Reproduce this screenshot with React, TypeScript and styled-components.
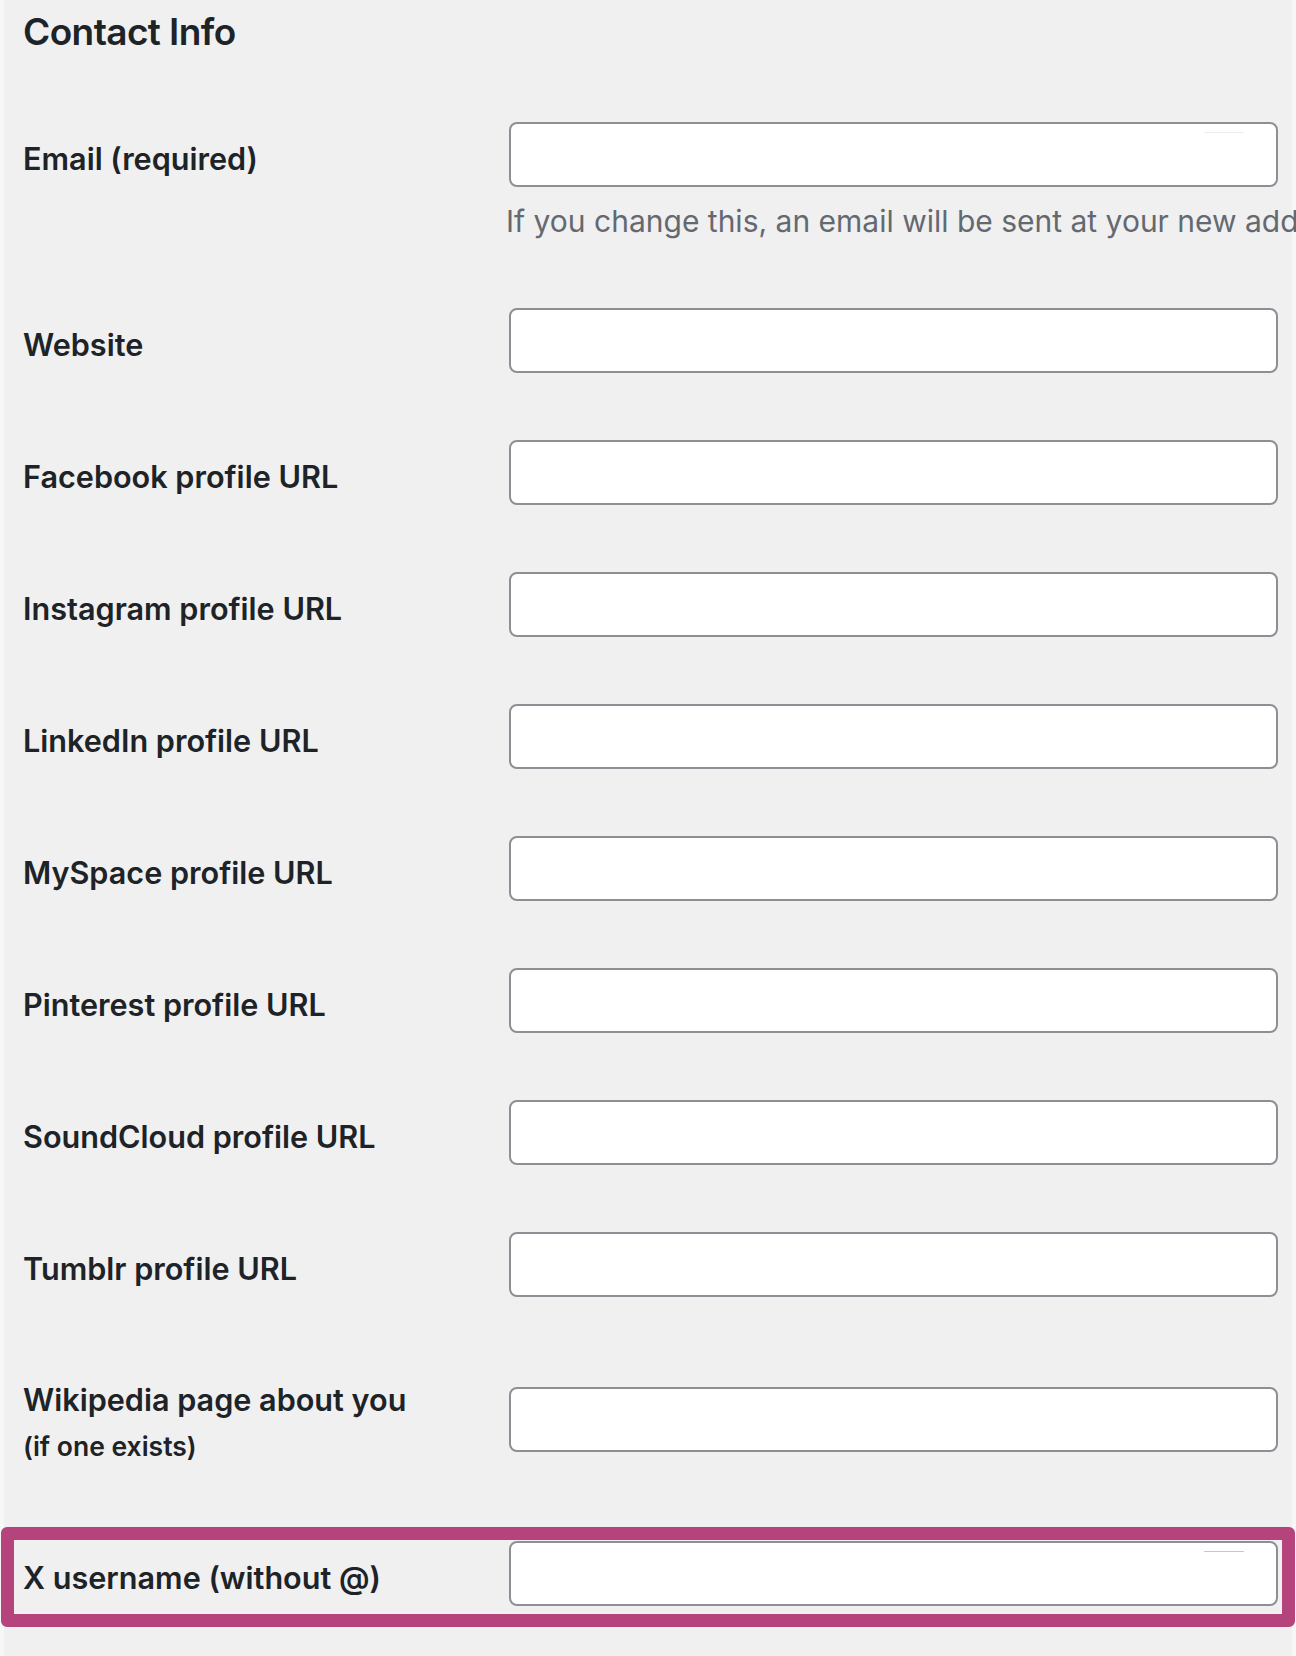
import React from 'react';
import styled, { createGlobalStyle } from 'styled-components';

const GlobalStyle = createGlobalStyle`
  html, body {
    margin: 0;
    padding: 0;
    background: #f6f7f7;
  }
  body {
    font-family: Inter, "Noto Sans", "Liberation Sans", sans-serif;
    color: #1d2327;
  }
`;

const Frame = styled.div`
  width: 1296px;
  min-height: 1656px;
  overflow: hidden;
  background: #f6f7f7;
`;

const Page = styled.div`
  width: 1288px;
  min-height: 1656px;
  margin-left: 4px;
  padding-left: 19px;
  box-sizing: border-box;
  background: #f0f0f1;
`;

const Heading = styled.h2`
  margin: 0;
  padding-top: 9px;
  font-size: 37px;
  line-height: 46px;
  font-weight: 600;
  letter-spacing: -0.6px;
  color: #1d2327;
`;

const Table = styled.div`
  margin-top: 33.5px;
  width: 1255px;
`;

const Row = styled.div<{ $highlight?: boolean }>`
  position: relative;
  display: grid;
  grid-template-columns: 486px 1fr;
  min-height: 132px;

  ${({ $highlight }) =>
    $highlight &&
    `
    &::after {
      content: '';
      position: absolute;
      top: 19.5px;
      left: -22px;
      width: 1294px;
      height: 100px;
      box-sizing: border-box;
      border: 13px solid #b5437c;
      border-radius: 6px;
      pointer-events: none;
    }
  `}
`;

const Label = styled.label<{ $top?: number }>`
  align-self: start;
  padding: ${({ $top = 50 }) => `${$top}px 0 40px`};
  font-size: 30.6px;
  line-height: 39px;
  font-weight: 600;
  color: #1d2327;
`;

const SubLabel = styled.span`
  display: block;
  margin-top: 5px;
  font-size: 26.5px;
  line-height: 44px;
  font-weight: 600;
`;

const Field = styled.div`
  align-self: center;
  padding: 33.5px 0;
  min-width: 0;
`;

const InputBox = styled.div`
  position: relative;
`;

const Input = styled.input`
  display: block;
  width: 100%;
  height: 65px;
  box-sizing: border-box;
  margin: 0;
  padding: 0 16px;
  border: 2px solid #8c8f94;
  border-radius: 8px;
  background: #fff;
  font-family: inherit;
  font-size: 30px;
  color: #2c3338;
  outline: none;
`;

const Mark = styled.span<{ $tone: string }>`
  position: absolute;
  top: 10px;
  right: 34px;
  width: 40px;
  height: 1px;
  background: ${({ $tone }) => $tone};
`;

const Description = styled.p`
  margin: 14px 0 0 -3px;
  font-size: 30px;
  line-height: 40px;
  color: #646970;
  white-space: nowrap;
`;

type FieldDef = {
  id: string;
  label: string;
  sub?: string;
  description?: string;
  highlight?: boolean;
  mark?: string;
  labelTop?: number;
};

const fields: FieldDef[] = [
  {
    id: 'email',
    label: 'Email (required)',
    description:
      'If you change this, an email will be sent at your new address to confirm it. The new address will not become active until confirmed.',
    mark: '#ececec',
  },
  { id: 'url', label: 'Website' },
  { id: 'facebook', label: 'Facebook profile URL' },
  { id: 'instagram', label: 'Instagram profile URL' },
  { id: 'linkedin', label: 'LinkedIn profile URL' },
  { id: 'myspace', label: 'MySpace profile URL' },
  { id: 'pinterest', label: 'Pinterest profile URL' },
  { id: 'soundcloud', label: 'SoundCloud profile URL' },
  { id: 'tumblr', label: 'Tumblr profile URL' },
  { id: 'wikipedia', label: 'Wikipedia page about you', sub: '(if one exists)', labelTop: 49 },
  { id: 'twitter', label: 'X username (without @)', highlight: true, mark: '#e6b9be' },
];

export default function App() {
  return (
    <>
      <GlobalStyle />
      <Frame>
        <Page>
          <Heading>Contact Info</Heading>
          <Table>
            {fields.map((f) => (
              <Row key={f.id} $highlight={f.highlight}>
                <Label htmlFor={f.id} $top={f.labelTop}>
                  {f.label}
                  {f.sub && <SubLabel>{f.sub}</SubLabel>}
                </Label>
                <Field>
                  <InputBox>
                    <Input id={f.id} type="text" />
                    {f.mark && <Mark $tone={f.mark} />}
                  </InputBox>
                  {f.description && <Description>{f.description}</Description>}
                </Field>
              </Row>
            ))}
          </Table>
        </Page>
      </Frame>
    </>
  );
}
